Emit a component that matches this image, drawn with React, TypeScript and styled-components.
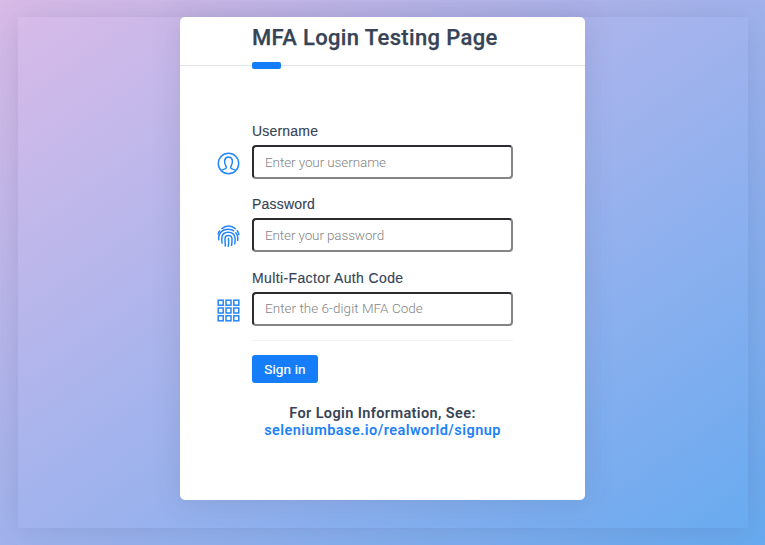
import React from "react";
import styled, { createGlobalStyle } from "styled-components";

const GlobalStyle = createGlobalStyle`
  * { box-sizing: border-box; }
  html, body, #root { height: 100%; margin: 0; }
  body {
    overflow: hidden;
    font-family: Roboto, "Liberation Sans", sans-serif;
    color: #364456;
  }
`;

const Page = styled.main`
  height: 100%;
  padding: 17px 17px 17px 17.5px;
  background: linear-gradient(to bottom right, #dabbe8 0%, #a1b3ed 50%, #66aaf0 100%);
`;

const Frame = styled.div`
  height: 511px;
  width: 730px;
  padding-left: 162.5px;
  box-shadow: 0 2px 30px rgba(60, 70, 100, 0.16);
`;

const Card = styled.section`
  width: 405px;
  height: 483px;
  border-radius: 5px;
  background: #fff;
  box-shadow: 0 2px 30px rgba(60, 70, 100, 0.16);
`;

const Header = styled.header`
  position: relative;
  height: 49px;
  padding-left: 72px;
  border-bottom: 1px solid #e1e3e6;
`;

const Title = styled.h1`
  margin: 0;
  padding-top: 1px;
  font-size: 22px;
  line-height: 40px;
  font-weight: 500;
  letter-spacing: 0.36px;
  white-space: nowrap;
  -webkit-text-stroke: 0.25px currentColor;
`;

const Accent = styled.span`
  position: absolute;
  left: 72px;
  bottom: -4px;
  width: 29px;
  height: 7px;
  border-radius: 2px;
  background: #167df8;
`;

const Form = styled.form`
  width: 261px;
  margin: 56px 0 0 72px;
`;

const Field = styled.div`
  position: relative;
  height: 73.3px;
`;

const Label = styled.label<{ $spacing: number }>`
  display: block;
  height: 23px;
  font: 14px/18px "Liberation Sans", sans-serif;
  letter-spacing: ${(p) => p.$spacing}px;
  white-space: nowrap;
  -webkit-text-stroke: 0.15px currentColor;
`;

const Input = styled.input<{ $spacing: number }>`
  display: block;
  width: 261px;
  height: 34px;
  padding: 0 11px 1px;
  border: 2px solid;
  border-color: #2a2c30 #858585 #858585 #2a2c30;
  border-radius: 4px;
  background: #fff;
  font: 300 13.5px Roboto, sans-serif;
  letter-spacing: ${(p) => p.$spacing}px;
  outline: 0;
  &::placeholder { color: #858585; opacity: 1; }
`;

const FieldIcon = styled.svg`
  position: absolute;
  left: -35px;
  top: 30px;
  width: 23px;
  height: 23px;
  fill: none;
  stroke: #2586f8;
  stroke-width: 1.5;
`;

const Actions = styled.div`
  height: 58px;
  padding-top: 14px;
  margin-top: -2px;
  border-top: 1px solid #f2f3f4;
`;

const Submit = styled.button`
  display: block;
  width: 66px;
  height: 28px;
  padding: 0;
  border: 0;
  border-radius: 3px;
  background: #167df8;
  color: #fff;
  font: 400 13.5px Roboto, sans-serif;
  letter-spacing: 0.15px;
  -webkit-text-stroke: 0.2px currentColor;
`;

const Info = styled.div`
  margin: 7px -20px 0;
  text-align: center;
  font-size: 14.5px;
  line-height: 17.5px;
  font-weight: 600;
  white-space: nowrap;
`;

const InfoText = styled.div`
  letter-spacing: 0.38px;
`;

const InfoLink = styled.a`
  color: #1c82f8;
  letter-spacing: 0.46px;
  text-decoration: none;
`;

function UserIcon() {
  return (
    <FieldIcon viewBox="0 0 23 23">
      <circle cx="11.5" cy="11.5" r="10.2" />
      <path d="M4.2 18.5c.7-.9 3.9-1.3 4.8-2.2.6-.6.4-1.5-.1-2.3-2.2-3.5-1.9-9.1 2.6-9.1s4.8 5.6 2.6 9.1c-.5.8-.7 1.7-.1 2.3.9.9 4.1 1.3 4.8 2.2" />
    </FieldIcon>
  );
}

function FingerprintIcon() {
  return (
    <FieldIcon viewBox="0 0 23 23">
      <path d="M4.5 3.8C8.8.4 14.3.4 18.7 3.8M1 9.5c.3-1.5 1-2.8 1.9-4M20 5.3c1.1 1.4 1.8 3 2 4.8" />
      <path d="M1.8 15.3C.8 8.6 5 4.2 11.5 4.2c2.4 0 4.2.7 5.6 1.9M18.4 7.3c2.3 2.5 2.9 5.3 2.2 8.7" />
      <path d="M4.9 18.7c.5-2-.3-3.6-.1-5.7.3-3.6 2.8-5.7 6.4-5.7 4.3 0 6.7 2.5 6.9 6.3.1 2.1-.1 3.9-.5 5.8" />
      <path d="M8 21.5c.8-2.8-.3-5.4 0-8 .2-1.9 1.4-3 3.3-3 2.2 0 3.6 1.2 3.7 3.2.1 2.6-.1 5-.6 7.3" />
      <path d="M11.4 12.8c.4 3.2.4 6-.2 9" />
    </FieldIcon>
  );
}

function GridIcon() {
  const cells = [1.2, 9, 16.8];
  return (
    <FieldIcon viewBox="0 0 23 23">
      {cells.map((y) =>
        cells.map((x) => <rect key={`${x}-${y}`} x={x} y={y} width="5" height="5" />)
      )}
    </FieldIcon>
  );
}

const fields = [
  { id: "username", label: "Username", hint: "Enter your username", ls: 0.2, hs: -0.1, Icon: UserIcon },
  { id: "password", label: "Password", hint: "Enter your password", ls: 0.2, hs: -0.13, Icon: FingerprintIcon },
  { id: "code", label: "Multi-Factor Auth Code", hint: "Enter the 6-digit MFA Code", ls: 0.38, hs: 0.03, Icon: GridIcon },
];

export default function App() {
  return (
    <Page>
      <GlobalStyle />
      <Frame>
        <Card>
          <Header>
            <Title>MFA Login Testing Page</Title>
            <Accent />
          </Header>
          <Form onSubmit={(e) => e.preventDefault()}>
            {fields.map(({ id, label, hint, ls, hs, Icon }) => (
              <Field key={id}>
                <Label htmlFor={id} $spacing={ls}>{label}</Label>
                <Input id={id} type={id === "password" ? "password" : "text"} placeholder={hint} $spacing={hs} />
                <Icon />
              </Field>
            ))}
            <Actions>
              <Submit type="submit">Sign in</Submit>
            </Actions>
            <Info>
              <InfoText>For Login Information, See:</InfoText>
              <InfoLink href="#signup">seleniumbase.io/realworld/signup</InfoLink>
            </Info>
          </Form>
        </Card>
      </Frame>
    </Page>
  );
}
